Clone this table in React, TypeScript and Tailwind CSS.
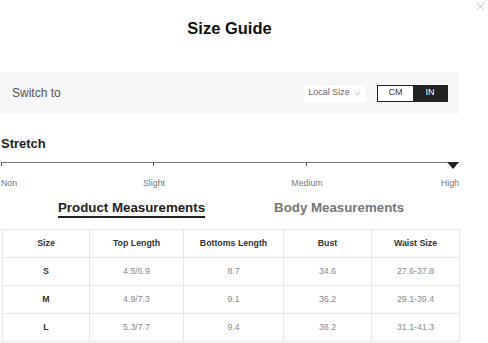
import { ChevronDown, X } from "lucide-react";

const rows = [
  { size: "S", top: "4.5/6.9", bottoms: "8.7", bust: "34.6", waist: "27.6-37.8" },
  { size: "M", top: "4.9/7.3", bottoms: "9.1", bust: "36.2", waist: "29.1-39.4" },
  { size: "L", top: "5.3/7.7", bottoms: "9.4", bust: "38.2", waist: "31.1-41.3" },
];

const cols = ["w-[87px]", "w-[94px]", "w-[100px]", "w-[88px]", "w-[88px]"];

export default function App() {
  return (
    <div className="relative w-[488px] h-[343px] overflow-hidden bg-white font-['Liberation_Sans',Arial,sans-serif]">
      {/* Close */}
      <button className="absolute right-[1px] top-0 text-[#999]">
        <X size={13} strokeWidth={1.1} />
      </button>

      <div className="w-[459px]">
        {/* Header */}
        <h1 className="h-[72px] pt-[18px] text-center text-[16.5px] font-bold leading-[20px] text-[#111]">
          Size Guide
        </h1>

        {/* Unit switch */}
        <div className="flex h-[42px] items-center justify-between bg-[#f6f6f6] pl-3 pr-[11px]">
          <span className="text-[12px] text-[#555]">Switch to</span>
          <div className="flex items-center gap-[11px]">
            <div className="flex h-[17px] w-[62px] items-center justify-center gap-[3px] bg-white text-[9px] text-[#666]">
              Local Size
              <ChevronDown size={9} strokeWidth={1.2} />
            </div>
            <div className="flex h-[17px] border border-[#222] text-[9px]">
              <span className="flex w-[35px] items-center justify-center bg-white text-[#333]">CM</span>
              <span className="flex w-[34px] items-center justify-center bg-[#222] text-white">IN</span>
            </div>
          </div>
        </div>

        {/* Stretch */}
        <div className="pt-[22px] pl-[1px]">
          <h2 className="text-[13px] font-bold leading-[16px] text-[#222]">Stretch</h2>
          <div className="relative mt-[10px] h-[4px] border-t border-[#777]">
            <span className="absolute left-0 top-0 h-[3px] w-px bg-[#555]" />
            <span className="absolute left-[152px] top-0 h-[3px] w-px bg-[#555]" />
            <span className="absolute left-[305px] top-0 h-[3px] w-px bg-[#555]" />
            <span className="absolute right-0 top-[-1px] h-0 w-0 border-x-[6px] border-t-[7px] border-x-transparent border-t-[#222]" />
          </div>
          <div className="relative mt-[11px] h-[12px] text-[8.8px] leading-[12px] text-[#777]">
            <span className="absolute left-0">Non</span>
            <span className="absolute left-[153px] -translate-x-1/2">Slight</span>
            <span className="absolute left-[306px] -translate-x-1/2">Medium</span>
            <span className="absolute right-0">High</span>
          </div>
        </div>

        {/* Tabs */}
        <div className="mt-[11px] flex h-[18px] items-start pl-[58px] text-[13.3px] font-bold leading-[15px]">
          <span className="border-b-2 border-[#222] pb-px text-[#222]">Product Measurements</span>
          <span className="ml-[69px] text-[#777]">Body Measurements</span>
        </div>

        {/* Table */}
        <table className="ml-[2px] mt-[11px] w-[457px] table-fixed border-collapse text-[8.8px]">
          <colgroup>
            {cols.map((c, i) => (
              <col key={i} className={c} />
            ))}
          </colgroup>
          <thead>
            <tr className="h-[28px]">
              {["Size", "Top Length", "Bottoms Length", "Bust", "Waist Size"].map((h) => (
                <th key={h} className="border border-[#e6e6e6] p-0 font-bold text-[#333]">
                  {h}
                </th>
              ))}
            </tr>
          </thead>
          <tbody>
            {rows.map((r) => (
              <tr key={r.size} className="h-[28px] text-center text-[#888]">
                <td className="border border-[#e6e6e6] p-0 font-bold text-[#333]">{r.size}</td>
                <td className="border border-[#e6e6e6] p-0">{r.top}</td>
                <td className="border border-[#e6e6e6] p-0">{r.bottoms}</td>
                <td className="border border-[#e6e6e6] p-0">{r.bust}</td>
                <td className="border border-[#e6e6e6] p-0">{r.waist}</td>
              </tr>
            ))}
          </tbody>
        </table>
      </div>
    </div>
  );
}
